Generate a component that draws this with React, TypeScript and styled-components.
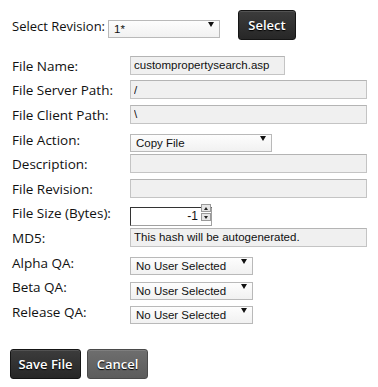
import React from 'react';
import styled, { createGlobalStyle } from 'styled-components';

const Global = createGlobalStyle`
  html, body { margin: 0; padding: 0; background: #fff; }
  body { font-family: "Open Sans", "Segoe UI", sans-serif; color: #111; }
  * { box-sizing: border-box; }
`;

const Page = styled.div`
  width: 378px;
  height: 387px;
  padding: 10px 11px 0 12px;
`;

const TopBar = styled.div`
  display: flex;
  align-items: center;
  height: 30px;
`;

const Label = styled.label`
  font-size: 13.5px;
  line-height: 17px;
  padding-top: 2px;
  color: #111;
  white-space: nowrap;
`;

const TopLabel = styled(Label)`
  width: 96px;
  font-size: 13px;
`;

const SelectWrap = styled.div<{ $w: number }>`
  position: relative;
  width: ${p => p.$w}px;
  height: 18px;
`;

const NativeSelect = styled.select`
  appearance: none;
  -webkit-appearance: none;
  width: 100%;
  height: 100%;
  margin: 0;
  padding: 0 0 0 5px;
  border: 1px solid #b9b9b9;
  border-radius: 0;
  background: linear-gradient(#fdfdfd, #f1f1f1);
  font-family: "Liberation Sans", Arial, sans-serif;
  font-size: 11.5px;
  color: #111;
  outline: none;
`;

const Arrow = styled.span`
  position: absolute;
  right: 6px;
  top: 6px;
  width: 0;
  height: 0;
  border-left: 3px solid transparent;
  border-right: 3px solid transparent;
  border-top: 5px solid #111;
  pointer-events: none;
`;

const Button = styled.button<{ $variant?: 'dark' | 'gray'; $w: number }>`
  width: ${p => p.$w}px;
  height: 30px;
  border-radius: 3px;
  border: 1px solid ${p => (p.$variant === 'gray' ? '#4a4a4a' : '#151515')};
  background: ${p =>
    p.$variant === 'gray'
      ? 'linear-gradient(#6e6e6e, #5c5c5c)'
      : 'linear-gradient(#3c3c3c, #272727)'};
  box-shadow: inset 0 1px 0 rgba(255,255,255,0.12);
  color: #fff;
  font-family: "Open Sans", "Segoe UI", sans-serif;
  font-weight: 600;
  font-size: 13px;
  text-shadow: 0 1px 1px #000;
  padding: 0;
  cursor: pointer;
`;

const SelectBtn = styled(Button)`
  margin-left: 18px;
`;

const Form = styled.div`
  margin-top: 13px;
  display: grid;
  grid-template-columns: 118px 1fr;
  grid-auto-rows: 24.6px;
  align-items: center;
`;

const TextInput = styled.input<{ $w?: number }>`
  width: ${p => (p.$w ? `${p.$w}px` : '100%')};
  height: 19px;
  margin: 0;
  padding: 0 3px;
  border: 1px solid #c4c4c4;
  border-top-color: #b4b4b4;
  background: #f0f0f0;
  font-family: "Liberation Sans", Arial, sans-serif;
  font-size: 11.5px;
  color: #111;
  outline: none;
`;

const NumberWrap = styled.div`
  position: relative;
  width: 82px;
  height: 19px;
`;

const NumberInput = styled.input`
  width: 100%;
  height: 100%;
  margin: 0;
  padding: 0 13px 0 2px;
  border: 1px solid #a0a0a0;
  border-top-color: #333;
  border-left-color: #333;
  background: #fff;
  text-align: right;
  font-family: "Liberation Sans", Arial, sans-serif;
  font-size: 12px;
  color: #111;
  outline: none;
`;

const Spinner = styled.div`
  position: absolute;
  right: 1px;
  top: 1px;
  bottom: 1px;
  width: 10px;
  display: flex;
  flex-direction: column;
  gap: 1px;
`;

const SpinBtn = styled.div<{ $up?: boolean }>`
  flex: 1;
  background: #e6e6e6;
  border: 1px solid #9a9a9a;
  display: flex;
  align-items: center;
  justify-content: center;
  &::after {
    content: '';
    width: 0;
    height: 0;
    border-left: 2.5px solid transparent;
    border-right: 2.5px solid transparent;
    ${p => (p.$up ? 'border-bottom: 3px solid #222;' : 'border-top: 3px solid #222;')}
  }
`;

const Actions = styled.div`
  display: flex;
  gap: 6px;
  margin-top: 25px;
  margin-left: -2px;
`;

type Opt = { label: string; w: number; value: string };

const Dropdown: React.FC<Opt> = ({ label, w, value }) => (
  <SelectWrap $w={w}>
    <NativeSelect aria-label={label} defaultValue={value}>
      <option>{value}</option>
    </NativeSelect>
    <Arrow />
  </SelectWrap>
);

export default function App() {
  return (
    <>
      <Global />
      <Page>
        <TopBar>
          <TopLabel>Select Revision:</TopLabel>
          <Dropdown label="Select Revision" w={112} value="1*" />
          <SelectBtn $w={58}>Select</SelectBtn>
        </TopBar>
        <Form>
          <Label>File Name:</Label>
          <TextInput $w={155} defaultValue="custompropertysearch.asp" />
          <Label>File Server Path:</Label>
          <TextInput defaultValue="/" />
          <Label>File Client Path:</Label>
          <TextInput defaultValue="\" />
          <Label>File Action:</Label>
          <Dropdown label="File Action" w={142} value="Copy File" />
          <Label>Description:</Label>
          <TextInput defaultValue="" />
          <Label>File Revision:</Label>
          <TextInput defaultValue="" />
          <Label>File Size (Bytes):</Label>
          <NumberWrap>
            <NumberInput defaultValue="-1" />
            <Spinner>
              <SpinBtn $up />
              <SpinBtn />
            </Spinner>
          </NumberWrap>
          <Label>MD5:</Label>
          <TextInput defaultValue="This hash will be autogenerated." readOnly />
          <Label>Alpha QA:</Label>
          <Dropdown label="Alpha QA" w={123} value="No User Selected" />
          <Label>Beta QA:</Label>
          <Dropdown label="Beta QA" w={123} value="No User Selected" />
          <Label>Release QA:</Label>
          <Dropdown label="Release QA" w={123} value="No User Selected" />
        </Form>
        <Actions>
          <Button $w={71}>Save File</Button>
          <Button $variant="gray" $w={61}>Cancel</Button>
        </Actions>
      </Page>
    </>
  );
}
